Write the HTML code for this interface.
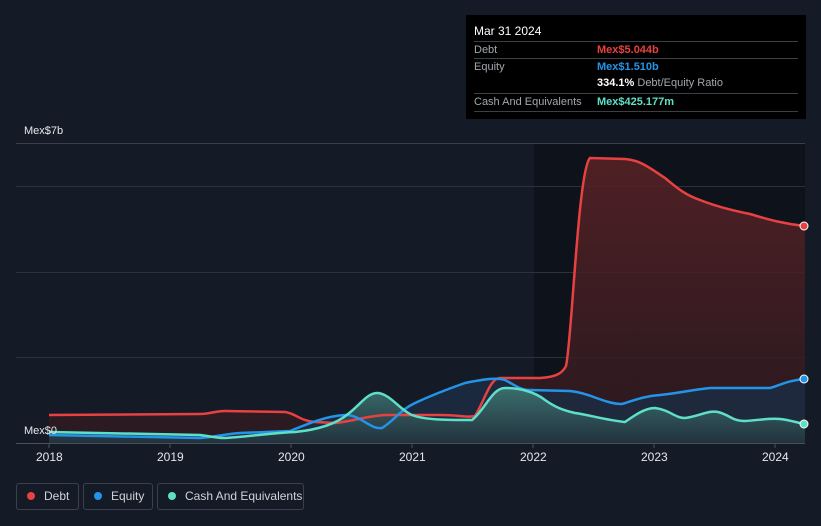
<!DOCTYPE html>
<html><head><meta charset="utf-8"><style>
body{margin:0;width:821px;height:526px;background:#151b26;font-family:"Liberation Sans",sans-serif;overflow:hidden;position:relative}
.tip{position:absolute;left:466px;top:15px;width:340px;height:104px;background:#000;color:#fff;font-size:11px}
.tip .row{position:absolute;left:8px;right:8px;border-top:1px solid #3a3f48;height:17px}
.tip span{position:absolute;top:2px;white-space:nowrap}
.leg{position:absolute;top:483px;height:27px;border:1px solid #3b414c;border-radius:3px;color:#d0d3d8;font-size:12px;line-height:25px;box-sizing:border-box;white-space:nowrap;overflow:hidden}
.dot{display:inline-block;width:8px;height:8px;border-radius:50%;margin:0 9px 0 10px;vertical-align:0px}
.xl{position:absolute;top:450px;color:#e5e7ea;font-size:12px}
</style></head><body>
<svg width="821" height="526" style="position:absolute;left:0;top:0">
<defs>
<linearGradient id="gd" x1="0" y1="0" x2="0" y2="1"><stop offset="0" stop-color="#5a2226"/><stop offset="1" stop-color="#2c1a20"/></linearGradient>
<linearGradient id="gc" x1="0" y1="0" x2="0" y2="1"><stop offset="0" stop-color="#3f7a76"/><stop offset="1" stop-color="#24343e"/></linearGradient>
</defs>
<rect x="534" y="143" width="271" height="300" fill="#0e131b"/>
<g stroke="#2c313a" stroke-width="1">
<line x1="16" y1="143.5" x2="805" y2="143.5" stroke="#3a3f48"/>
<line x1="16" y1="186.5" x2="805" y2="186.5"/>
<line x1="16" y1="272.5" x2="805" y2="272.5"/>
<line x1="16" y1="357.5" x2="805" y2="357.5"/>
</g>
<path d="M49,415 L200,414 C210,414 215,411 225,411 L285,412 C295,413 300,421 315,422 L335,423 C350,422 365,416 385,415 L440,415 C460,415 468,418 475,416 C485,400 490,378 500,378 L540,378 C555,377 562,374 566,366 C572,340 578,170 590,158 L625,159 C640,160 650,168 665,178 C675,186 683,194 700,200 C715,206 730,210 750,214 C770,220 785,224 805,226 L805,443 L49,443Z" fill="url(#gd)" opacity="0.85"/>
<path d="M49,435 L200,438 C215,437 225,434 240,433 L290,431 C305,425 325,416 345,415 C360,414 370,430 382,428 C395,420 400,410 415,403 C430,396 445,390 465,383 C480,380 495,377 505,380 C515,385 520,390 530,390 L570,391 C590,393 605,404 622,404 C635,400 645,396 660,395 C680,393 690,390 710,388 L770,388 C780,385 790,380 805,379 L805,443 L49,443Z" fill="#1c2d45" opacity="0.8"/>
<path d="M49,432 L200,435 C210,436 215,438 225,438 C245,437 270,433 295,432 C315,430 335,425 348,414 C360,405 368,392 378,393 C390,394 400,410 412,415 C425,420 445,420 472,420 C485,410 492,388 505,388 C520,388 535,392 545,400 C555,407 562,410 575,413 C590,415 605,420 625,422 C635,415 645,408 655,408 C670,410 675,418 685,418 C700,416 708,410 718,412 C730,415 732,421 745,421 C760,420 770,418 780,419 C790,420 798,423 805,424 L805,443 L49,443Z" fill="url(#gc)" opacity="0.85"/>
<line x1="16" y1="443.5" x2="805" y2="443.5" stroke="#4a505a"/>
<g stroke="#4a505a"><line x1="49" y1="443" x2="49" y2="448"/><line x1="170" y1="443" x2="170" y2="448"/><line x1="291" y1="443" x2="291" y2="448"/><line x1="412" y1="443" x2="412" y2="448"/><line x1="533" y1="443" x2="533" y2="448"/><line x1="654" y1="443" x2="654" y2="448"/><line x1="775" y1="443" x2="775" y2="448"/></g>
<g fill="none" stroke-width="2.5">
<path d="M49,415 L200,414 C210,414 215,411 225,411 L285,412 C295,413 300,421 315,422 L335,423 C350,422 365,416 385,415 L440,415 C460,415 468,418 475,416 C485,400 490,378 500,378 L540,378 C555,377 562,374 566,366 C572,340 578,170 590,158 L625,159 C640,160 650,168 665,178 C675,186 683,194 700,200 C715,206 730,210 750,214 C770,220 785,224 805,226" stroke="#e84142"/>
<path d="M49,435 L200,438 C215,437 225,434 240,433 L290,431 C305,425 325,416 345,415 C360,414 370,430 382,428 C395,420 400,410 415,403 C430,396 445,390 465,383 C480,380 495,377 505,380 C515,385 520,390 530,390 L570,391 C590,393 605,404 622,404 C635,400 645,396 660,395 C680,393 690,390 710,388 L770,388 C780,385 790,380 805,379" stroke="#2394e8"/>
<path d="M49,432 L200,435 C210,436 215,438 225,438 C245,437 270,433 295,432 C315,430 335,425 348,414 C360,405 368,392 378,393 C390,394 400,410 412,415 C425,420 445,420 472,420 C485,410 492,388 505,388 C520,388 535,392 545,400 C555,407 562,410 575,413 C590,415 605,420 625,422 C635,415 645,408 655,408 C670,410 675,418 685,418 C700,416 708,410 718,412 C730,415 732,421 745,421 C760,420 770,418 780,419 C790,420 798,423 805,424" stroke="#5ee0c8"/>
</g>
<circle cx="804" cy="226" r="4" fill="#e84142" stroke="#fff" stroke-width="1"/>
<circle cx="804" cy="379" r="4" fill="#2394e8" stroke="#fff" stroke-width="1"/>
<circle cx="804" cy="424" r="4" fill="#5ee0c8" stroke="#fff" stroke-width="1"/>
</svg>
<div style="position:absolute;left:24px;top:125px;color:#e5e7ea;font-size:11px">Mex$7b</div>
<div style="position:absolute;left:24px;top:425px;color:#e5e7ea;font-size:11px">Mex$0</div>
<div class="xl" style="left:36px">2018</div><div class="xl" style="left:157px">2019</div><div class="xl" style="left:278px">2020</div><div class="xl" style="left:399px">2021</div><div class="xl" style="left:520px">2022</div><div class="xl" style="left:641px">2023</div><div class="xl" style="left:762px">2024</div>
<div class="tip">
<div style="position:absolute;left:8px;top:9px;font-size:12px">Mar 31 2024</div>
<div class="row" style="top:26px"><span style="color:#a3a7ae">Debt</span><span style="left:123px;color:#e84142;font-weight:bold">Mex$5.044b</span></div>
<div class="row" style="top:43px"><span style="color:#a3a7ae">Equity</span><span style="left:123px;color:#2394e8;font-weight:bold">Mex$1.510b</span></div>
<div class="row" style="top:60px;border:none"><span style="left:123px"><b>334.1%</b> <span style="position:static;color:#a3a7ae">Debt/Equity Ratio</span></span></div>
<div class="row" style="top:78px;border-bottom:1px solid #3a3f48"><span style="color:#a3a7ae">Cash And Equivalents</span><span style="left:123px;color:#5ee0c8;font-weight:bold">Mex$425.177m</span></div>
</div>
<div class="leg" style="left:16px;width:63px"><span class="dot" style="background:#e84142"></span>Debt</div>
<div class="leg" style="left:83px;width:70px"><span class="dot" style="background:#2394e8"></span>Equity</div>
<div class="leg" style="left:157px;width:147px"><span class="dot" style="background:#5ee0c8"></span>Cash And Equivalents</div>
</body></html>
